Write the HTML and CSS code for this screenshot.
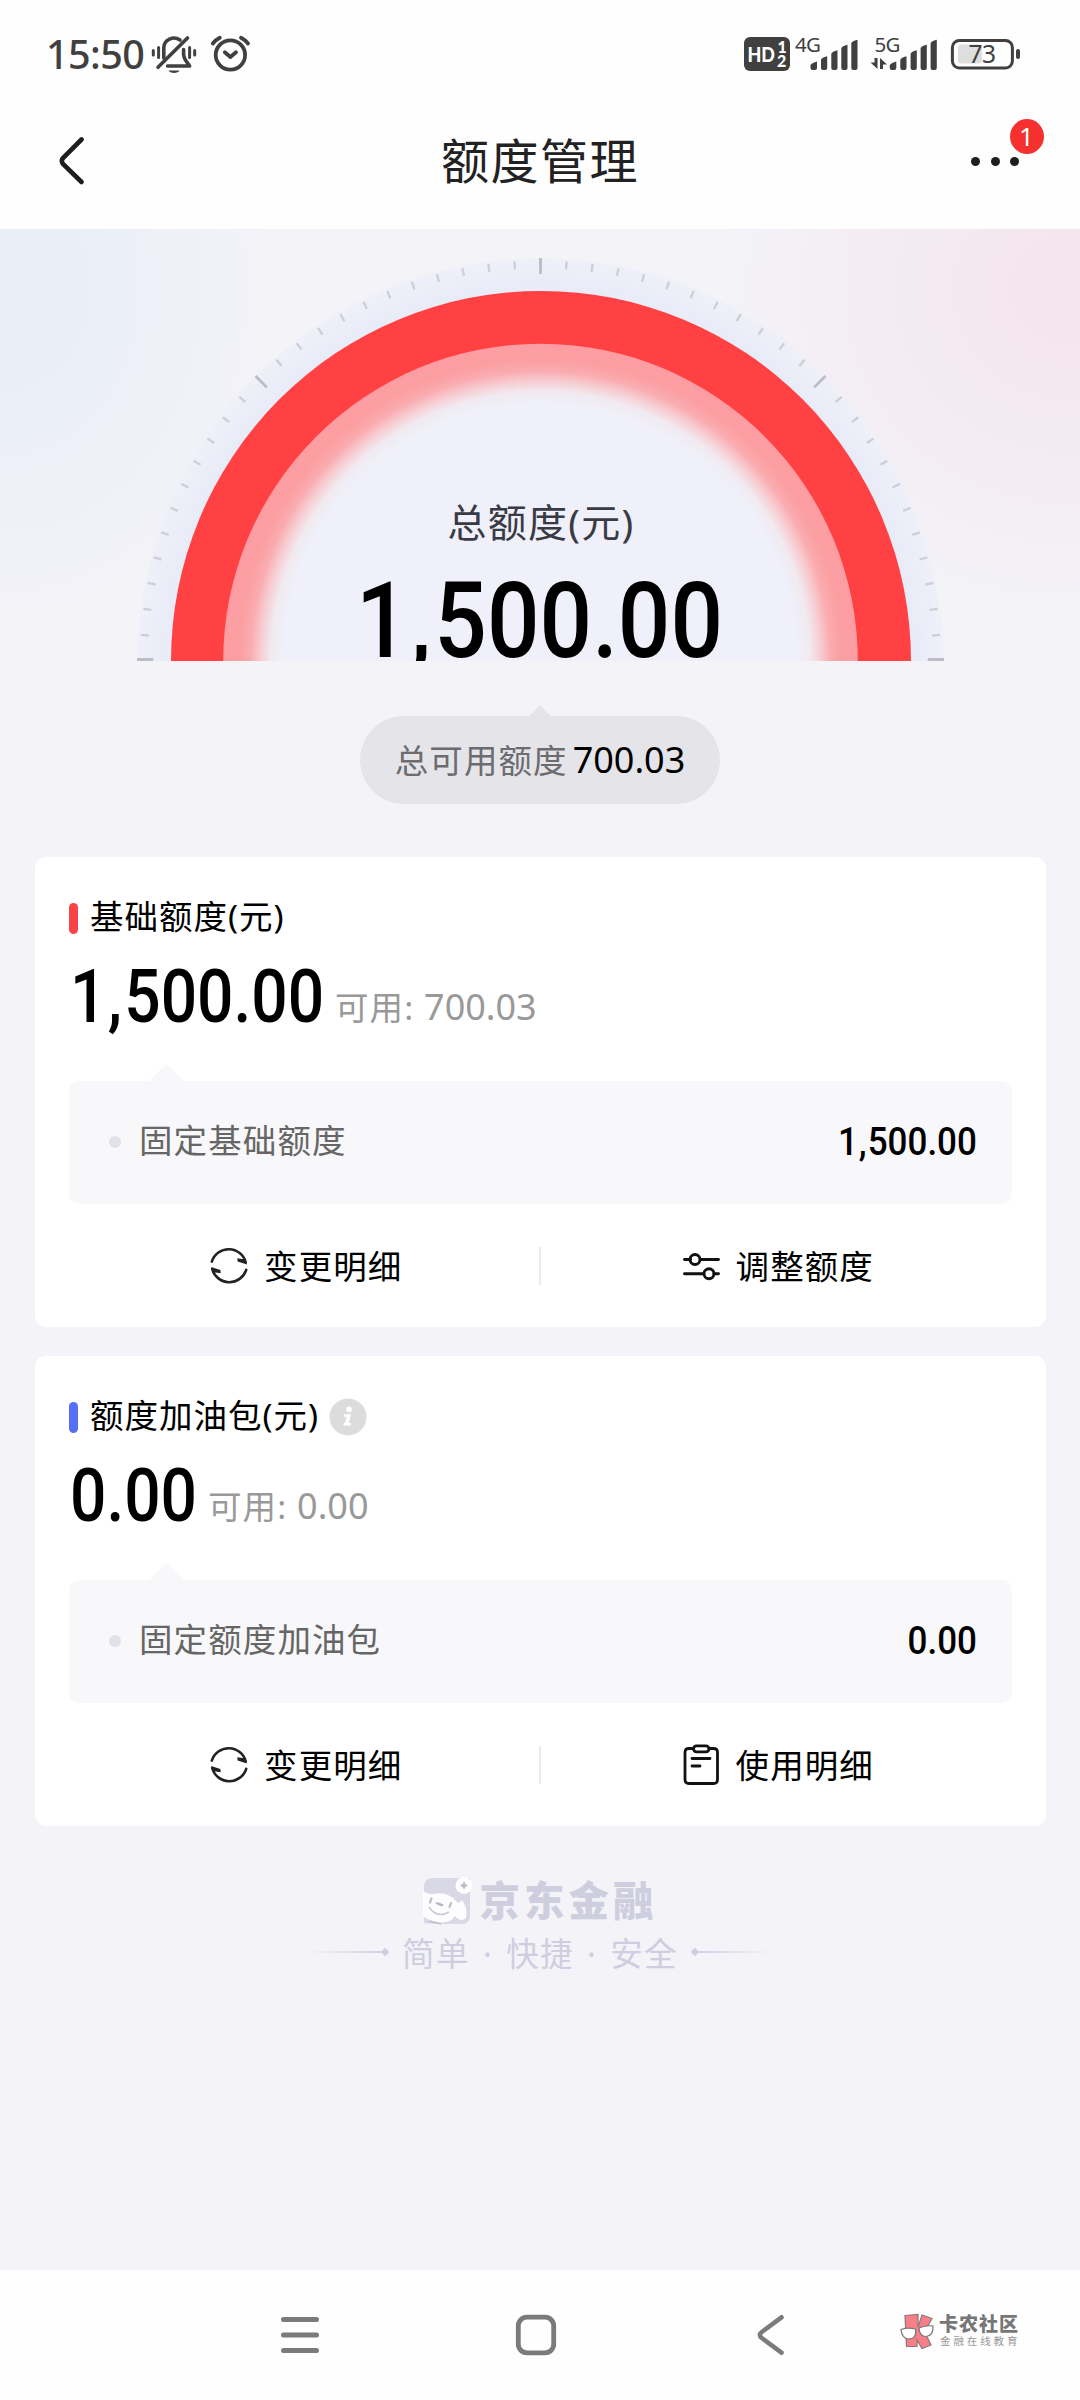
FILE: index.html
```html
<!DOCTYPE html>
<html lang="zh-CN">
<head>
<meta charset="utf-8">
<title>额度管理</title>
<link rel="stylesheet" href="styles.css">
</head>
<body>
<svg class="defs" aria-hidden="true">
  <symbol id="refresh" viewBox="0 0 40 40">
    <g fill="none" stroke="#222" stroke-width="2.6" stroke-linecap="round">
      <path d="M2.800 15.600A17.700 17.700 0 0 1 36.800 16.500"/>
      <path d="M37.200 23.800A17.700 17.700 0 0 1 3.200 23"/>
    </g>
    <path d="M28.300 12.300 35 13.200l3 5.400-9.400-3zM11.700 27.200 5 26.300l-3-5.400 9.400 3z" fill="#222"/>
  </symbol>
</svg>
<header class="top">
  <div class="status">
    <div class="status-left">
      <span class="time">15:50</span>
      <svg class="status-icons" viewBox="151 32 102 44" fill="none" stroke="#404040" stroke-linecap="round" stroke-linejoin="round">
        <g stroke-width="3.6">
          <path d="M163.800 58V47.500A10.200 9.600 0 0 1 180 40"/>
          <path d="M183.600 49.500v4.500c0 5.500 3.400 7.700 6 12h-22"/>
          <path d="M187.500 38 158 67.200"/>
        </g>
        <path d="M168.500 70.500h11c-1 3.200-10 3.200-11 0z" fill="#404040" stroke="none"/>
        <path d="M153.300 50.500v4.500M158.600 47.500v10M189.600 47.500v10M194.700 50.500v4.500" stroke-width="3"/>
        <circle cx="230.400" cy="55" r="14.700" stroke-width="3.800"/>
        <path d="M224.800 52.200 230.400 57l5.600-4.800" stroke-width="3.800"/>
        <path d="M212.800 43.500c2-2.600 4.200-4.400 7-5.800M248 43.500c-2-2.600-4.200-4.400-7-5.800" stroke-width="3.800"/>
      </svg>
    </div>
    <svg class="status-signal" viewBox="742 14 282 82">
      <rect x="744" y="37" width="46" height="34" rx="6" fill="#404040"/>
      <g class="hd" fill="#fff">
        <text x="747.500" y="61.500" font-size="20.500" textLength="27.500" lengthAdjust="spacingAndGlyphs">HD</text>
        <text x="777.500" y="52.500" font-size="16">1</text>
        <text x="777" y="67" font-size="16">2</text>
      </g>
      <g class="net" fill="#404040">
        <text x="795" y="51.800" textLength="26">4G</text>
        <text x="874.500" y="51.800" textLength="26">5G</text>
      </g>
      <g id="bars" fill="#404040">
        <path d="M810.500 65.500q0-2 6.500-4V68q0 2-2 2h-2.500q-2 0-2-2z"/>
        <path d="M821 60q0-2.200 6.200-3.800V68q0 2-2 2H823q-2 0-2-2z"/>
        <path d="M831.300 54q0-2.200 6.200-3.800V68q0 2-2 2h-2.200q-2 0-2-2z"/>
        <path d="M841.300 48.500q0-2.200 6.200-3.800V68q0 2-2 2h-2.200q-2 0-2-2z"/>
        <path d="M851.300 43.500q0-2.200 6.200-3.800V68q0 2-2 2h-2.200q-2 0-2-2z"/>
      </g>
      <use href="#bars" x="79.300"/>
      <path d="M877.500 58v11l-7-6.500h4V58zM880 69V58l7 6.500h-4V69z" fill="#404040"/>
      <rect x="958" y="44.500" width="24" height="19" rx="3" fill="#dedede"/>
      <rect x="952.400" y="40.400" width="60" height="27.600" rx="7" fill="none" stroke="#404040" stroke-width="3"/>
      <rect x="1016" y="49" width="4" height="10" rx="2" fill="#404040"/>
      <text class="net" x="968.500" y="63" textLength="27.500" fill="#404040">73</text>
    </svg>
  </div>
  <div class="nav">
    <svg class="back" viewBox="0 0 30 50"><path d="M23.500 3.500 5 22q-2.300 3 0 6l18.500 18" fill="none" stroke="#1e1e1e" stroke-width="4.600" stroke-linecap="round"/></svg>
    <h1 class="title">额度管理</h1>
    <div class="more">
      <i></i><i></i><i></i>
      <b class="badge">1</b>
    </div>
  </div>
</header>

<main class="page">
  <section class="hero">
    <div class="gauge">
      <svg class="gauge-dial" viewBox="137 258 807 403">
        <defs>
          <radialGradient id="glow" gradientUnits="userSpaceOnUse" cx="540.500" cy="661" r="317">
            <stop offset=".81" stop-color="#eff0f9"/>
            <stop offset=".85" stop-color="#f1eaf0"/>
            <stop offset=".885" stop-color="#f7cbd0"/>
            <stop offset=".915" stop-color="#faacb0"/>
            <stop offset=".95" stop-color="#fb9fa2"/>
            <stop offset="1" stop-color="#fd9da3"/>
          </radialGradient>
          <radialGradient id="band" gradientUnits="userSpaceOnUse" cx="540.500" cy="661" r="403">
            <stop offset=".92" stop-color="#e8ecf7"/>
            <stop offset="1" stop-color="#eff0f8"/>
          </radialGradient>
        </defs>
        <circle cx="540.500" cy="661" r="403" fill="url(#band)"/>
        <g fill="none">
          <circle cx="540.500" cy="661" r="396.500" stroke="#cdced8" stroke-width="8" pathLength="96" stroke-dasharray=".09 .91" stroke-dashoffset=".045"/>
          <circle cx="540.500" cy="661" r="395" stroke="#bbbcc5" stroke-width="16" pathLength="8" stroke-dasharray=".009 .991" stroke-dashoffset=".0045"/>
        </g>
        <path d="M137 659.500h16M928 659.500h16" stroke="#bbbcc5" stroke-width="3"/>
        <circle cx="541" cy="661" r="370" fill="#ff4144"/>
        <circle cx="540.500" cy="661" r="317.300" fill="url(#glow)"/>
      </svg>
      <div class="gauge-text">
        <div class="gauge-label">总额度(元)</div>
        <div class="gauge-value"><span class="din">1<span class="comma">,</span>500.00</span></div>
      </div>
    </div>
    <div class="pill">总可用额度<em>700.03</em></div>
  </section>

  <section class="card">
    <h2 class="card-title"><i class="mark mark-red"></i><span class="lift">基础额度(元)</span></h2>
    <div class="amount-row">
      <div class="amount amount-long"><span class="din">1<span class="comma">,</span>500.00</span></div>
      <span class="usable">可用: <span class="n">700.03</span></span>
    </div>
    <div class="detail">
      <span class="detail-name">固定基础额度</span>
      <span class="detail-value"><span class="din">1<span class="comma">,</span>500.00</span></span>
    </div>
    <div class="actions">
      <a class="action"><svg class="ico"><use href="#refresh"/></svg><span class="lift">变更明细</span></a>
      <a class="action">
        <svg class="ico" viewBox="0 0 40 40" fill="none" stroke="#111" stroke-width="2.900" stroke-linecap="round"><path d="M3.500 13.500h6M19.500 13.500h18M3.500 27.800h19M33 27.800h4.500"/><circle cx="14" cy="13.500" r="5"/><circle cx="28" cy="27.800" r="5"/></svg><span class="lift">调整额度</span></a>
    </div>
  </section>

  <section class="card">
    <h2 class="card-title"><i class="mark mark-blue"></i><span class="lift">额度加油包(元)</span>
      <svg class="info" viewBox="0 0 38 38"><circle cx="19" cy="19" r="18.500" fill="#dcdcdc"/><circle cx="20" cy="11.300" r="2.900" fill="#fff"/><path d="M15 16.300h7l-2.200 8.700h2v2.400h-7.200V25h1.500l1.500-6.300H15z" fill="#fff"/></svg>
    </h2>
    <div class="amount-row">
      <div class="amount amount-short"><span class="din">0.00</span></div>
      <span class="usable">可用: <span class="n">0.00</span></span>
    </div>
    <div class="detail">
      <span class="detail-name">固定额度加油包</span>
      <span class="detail-value"><span class="din">0.00</span></span>
    </div>
    <div class="actions">
      <a class="action"><svg class="ico"><use href="#refresh"/></svg><span class="lift">变更明细</span></a>
      <a class="action">
        <svg class="ico" viewBox="0 0 40 40" fill="none" stroke="#111" stroke-width="2.800" stroke-linecap="round" stroke-linejoin="round"><path d="M12.500 3.500H8Q4 3.500 4 7.500v27q0 4 4 4h24.500q4 0 4-4v-27q0-4-4-4h-4.500"/><rect x="12.500" y=".8" width="15.500" height="6" rx="3"/><path d="M11 13.500h18M11 21h8"/></svg><span class="lift">使用明细</span></a>
    </div>
  </section>

  <footer class="brand">
    <div class="brand-name">
      <svg class="brand-logo" viewBox="0 0 49 48">
        <path d="M1 46V10Q1 1 10 1h37v37q0 9-9 9H10z" fill="#d9d8e6"/>
        <path d="M0 14q5 4 10 3 14-3 23 7 2 4 6-1 6 8 4 18-4 4-9 0l-2-2Q27 47 15 45 4 43 0 39z" fill="#fdfdff"/>
        <circle cx="41" cy="8.500" r="8.500" fill="#fdfdff"/>
        <path d="m41 4.500 1.500 2.500 2.500 1.500-2.500 1.500-1.500 2.500-1.500-2.500L37 8.500l2.500-1.500z" fill="#bdbccb"/>
        <path d="M6 30q8 12 20 5" fill="none" stroke="#c9c8d8" stroke-width="1.500"/>
        <path d="M12 26q3-2 9 2-3 3-9-2z" fill="#b5b4c4"/>
        <path d="m8.500 21.500-1.500 4M28 26l-1.500 4" stroke="#c0bfce" stroke-width="2.200" stroke-linecap="round"/>
        <path d="m6 44 12 3" stroke="#b5b4bc" stroke-width="1"/>
      </svg>
      京东金融
    </div>
    <div class="slogan"><i class="rule"></i><span>简单 · 快捷 · 安全</span><i class="rule rule-right"></i></div>
  </footer>
</main>

<div class="sysbar">
  <svg class="sys" viewBox="0 0 44 44" stroke="#7b7b7b" stroke-width="5" stroke-linecap="round"><path d="M5.500 6.500h33M5.500 22h33M5.500 37.500h33"/></svg>
  <svg class="sys" viewBox="0 0 44 44"><rect x="4.300" y="4.200" width="35.400" height="35.600" rx="8.500" fill="none" stroke="#7b7b7b" stroke-width="4.800"/></svg>
  <svg class="sys" viewBox="0 0 44 44"><path d="M31.500 4.300 11.800 19q-3.800 3 0 6l19.700 14.700" fill="none" stroke="#7b7b7b" stroke-width="4.600" stroke-linecap="round"/></svg>
  <div class="mark-site">
    <svg class="mark-logo" viewBox="0 0 36 37">
      <g stroke="#8c7779" stroke-width="1.200" fill="#f77f88">
        <path d="M5 2.500 18 1.500V14L22 2l10 3.500-7.500 13L31 32l-9 3.500-5-8.500v6.500H6.500z"/>
      </g>
      <g stroke="#777" stroke-width="1.200" fill="#fff">
        <path d="M1 16.500q7-2.500 14.500-.5Q17 26 8.500 26 2 25.500 1 16.500zM19 15q7-3 14-2 .5 10-7 10.500Q19.500 23.500 19 15z"/>
      </g>
    </svg>
    <div class="mark-words"><strong>卡农社区</strong><small>金融在线教育</small></div>
  </div>
</div>
</body>
</html>
```
FILE: styles.css
```css
* { box-sizing: border-box; }
body {
  margin: 0;
  width: 1080px;
  height: 2400px;
  display: flex;
  flex-direction: column;
  background: #f3f3f8;
  color: #000;
  font-family: "Noto Sans", "Noto Sans CJK SC", sans-serif;
  overflow: hidden;
}
svg { display: block; flex: none; }
i, em { font-style: normal; }
h1, h2 { margin: 0; font-weight: 400; }
.defs { width: 0; height: 0; position: absolute; }
.lift { padding-bottom: 3px; }

/* top bar */
.top { height: 229px; background: #fefefe; flex: none; }
.status {
  height: 108px;
  display: flex;
  justify-content: space-between;
  padding: 0 56px 0 46px;
}
.status-left { display: flex; }
.time {
  width: 105px;
  line-height: 108px;
  font-size: 39.5px;
  letter-spacing: -.6px;
  font-weight: 500;
  color: #404040;
}
.status-icons { width: 102px; height: 44px; margin-top: 32px; }
.status-signal { width: 282px; height: 82px; margin-top: 14px; }
.hd { font-family: Lato, sans-serif; font-weight: 900; }
.net { font-family: "Noto Sans", sans-serif; font-size: 20.5px; }
text.net { font-size: 24.5px; }
.nav {
  height: 106px;
  display: grid;
  grid-template-columns: 1fr auto 1fr;
  align-items: center;
}
.back { width: 30px; height: 50px; margin-left: 58px; }
.title {
  font-size: 48px;
  line-height: 72px;
  letter-spacing: 1.5px;
  color: #222;
}
.more {
  position: relative;
  justify-self: end;
  display: flex;
  gap: 10.5px;
  margin-right: 61px;
}
.more i { width: 9px; height: 9px; border-radius: 50%; background: #1e1e1e; }
.badge {
  position: absolute;
  left: 38.5px;
  top: -38px;
  width: 34px;
  height: 35px;
  border-radius: 50%;
  background: #f5302f;
  color: #fff;
  font-size: 26px;
  font-weight: 400;
  line-height: 34px;
  text-align: center;
}

/* condensed figures */
.din {
  display: block;
  font-family: Roboto, sans-serif;
  font-weight: 500;
  white-space: nowrap;
  transform: scaleX(.868);
  transform-origin: 0 50%;
}
.comma { padding: 0 .035em 0 .02em; }

/* hero */
.page { flex: 1; }
.hero {
  height: 628px;
  padding-top: 29px;
  display: flex;
  flex-direction: column;
  align-items: center;
  background:
    radial-gradient(ellipse 260px 330px at 10px 60px, #e9eef7 20%, #e9eef700),
    radial-gradient(ellipse 350px 330px at 1070px 60px, #f4e6ee 15%, #f4e6ee00),
    #f3f3f8;
}
.gauge { width: 807px; height: 403px; display: grid; overflow: hidden; }
.gauge > * { grid-area: 1 / 1; }
.gauge-dial { width: 807px; height: 403px; }
.gauge-text { display: flex; flex-direction: column; align-items: center; padding-top: 234px; height: 403px; }
.gauge-label { font-size: 39px; line-height: 60px; letter-spacing: 1.3px; margin-left: 2px; color: #3a3a44; }
.gauge-value { width: 368px; height: 130px; font-size: 105.5px; line-height: 130px; margin-top: 4px; }
.gauge-value .din { transform: scaleX(.877); }
.pill {
  position: relative;
  margin-top: 55px;
  width: 360px;
  height: 88px;
  border-radius: 44px;
  background: #e4e4e9;
  display: flex;
  justify-content: center;
  font-size: 33.5px;
  letter-spacing: 1.1px;
  line-height: 88px;
  color: #6c6c70;
}
.pill::before {
  content: "";
  position: absolute;
  left: 169px;
  top: -11px;
  width: 22px;
  height: 11px;
  background: inherit;
  clip-path: polygon(50% 0, 100% 100%, 0 100%);
}
.pill em { color: #000; font-size: 36px; letter-spacing: 0; margin-left: 5px; }

/* cards */
.card {
  width: 1011px;
  height: 470px;
  margin: 0 auto 29px 35px;
  padding: 34px 34px 0 34px;
  border-radius: 11px;
  background: #fff;
}
.card-title {
  display: flex;
  align-items: center;
  height: 54px;
  font-size: 33.5px;
  letter-spacing: 1px;
  line-height: 51px;
}
.mark { width: 9px; height: 31px; border-radius: 4.5px; margin-right: 12px; }
.mark-red { background: #f94346; }
.mark-blue { background: #5570f5; }
.info { width: 38px; height: 38px; margin-left: 10px; }
.amount-row { display: flex; height: 100px; padding-top: 2px; padding-left: 1px; }
.amount { font-size: 73.8px; line-height: 100px; height: 100px; }
.amount-long { width: 265px; }
.amount-short { width: 138px; }
.usable { font-size: 33.5px; letter-spacing: 1.1px; line-height: 120px; color: #999; white-space: pre; }
.usable .n { font-size: 36px; letter-spacing: 0; }
.detail {
  position: relative;
  margin-top: 36px;
  height: 123px;
  border-radius: 10px;
  background: #f8f8fa;
  display: flex;
  justify-content: space-between;
  padding: 0 35px 0 40px;
  line-height: 119px;
  font-size: 33.5px;
  letter-spacing: 1.1px;
  color: #666;
}
.detail::before {
  content: "";
  position: absolute;
  left: 80px;
  top: -16px;
  width: 35px;
  height: 16px;
  background: inherit;
  clip-path: polygon(46% 0, 54% 0, 100% 100%, 0 100%);
}
.detail-name { display: flex; height: 119px; align-items: center; }
.detail-name::before { content: ""; width: 12px; height: 12px; border-radius: 50%; background: #e1e1e9; margin: 3px 18px 0 0; }
.detail-value { color: #000; font-size: 38.8px; letter-spacing: 0; line-height: 122px; }
.detail-value .din { transform: scaleX(.902); transform-origin: 100% 50%; }
.actions { display: grid; grid-template-columns: 1fr 1fr; height: 122px; position: relative; }
.actions::after {
  content: "";
  position: absolute;
  left: 470px;
  top: 43px;
  width: 2px;
  height: 38px;
  background: #ebebeb;
}
.action {
  display: flex;
  align-items: center;
  justify-content: center;
  gap: 15px;
  padding: 1px 0 0 2px;
  font-size: 33.5px;
  letter-spacing: 1.1px;
}
.ico { width: 40px; height: 40px; overflow: visible; }

/* footer */
.brand { display: flex; flex-direction: column; align-items: center; padding-top: 22px; }
.brand-name {
  display: flex;
  align-items: center;
  gap: 8px;
  height: 48px;
  font-size: 40.5px;
  font-weight: 900;
  letter-spacing: 4px;
  line-height: 48px;
  color: #cfcedf;
}
.brand-logo { width: 49px; height: 48px; }
.slogan {
  display: flex;
  align-items: center;
  gap: 14px;
  height: 54px;
  margin-top: 0;
  font-size: 32.5px;
  letter-spacing: 1.3px;
  word-spacing: 3.5px;
  color: #cfcee0;
  white-space: nowrap;
}
.rule {
  width: 80px;
  height: 2px;
  position: relative;
  background: linear-gradient(90deg, #cfcee000, #cfcee0);
}
.rule::after {
  content: "";
  position: absolute;
  right: 0;
  top: -2px;
  width: 6px;
  height: 6px;
  background: #cfcee0;
  transform: rotate(45deg);
}
.rule-right { transform: scaleX(-1); }

/* system navigation */
.sysbar {
  height: 130px;
  background: #fefefe;
  display: flex;
  padding: 43px 0 0 278px;
  flex: none;
}
.sys { width: 44px; height: 44px; margin-right: 192px; }
.sys:nth-child(3) { margin-right: 107px; }
.mark-site { display: flex; gap: 3px; }
.mark-logo { width: 36px; height: 37px; margin-left: -1px; }
.mark-words { display: flex; flex-direction: column; padding-top: 1px; }
.mark-words strong { font-size: 19px; font-weight: 900; letter-spacing: 1px; line-height: 20px; color: #777; }
.mark-words small { font-size: 10.5px; letter-spacing: 2.9px; line-height: 15px; color: #999; margin-left: 1px; }
```
